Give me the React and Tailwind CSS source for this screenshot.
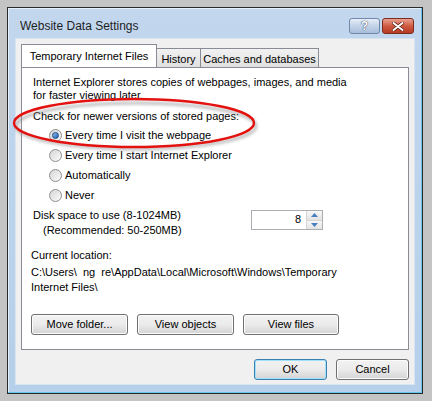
const font = { fontFamily: '"Liberation Sans", Arial, sans-serif' }

function Radio({ checked, label }) {
  return (
    <div className="flex h-[20px] items-center">
      <span className="ml-[16px] flex h-[13px] w-[13px] items-center justify-center rounded-full border border-[#8e8f8f] bg-gradient-to-br from-[#d5d5d5] to-[#fbfbfb]">
        {checked && (
          <span className="h-[7px] w-[7px] rounded-full border border-[#1c4c88] bg-gradient-to-br from-[#8ec6f5] to-[#1d5aa8]" />
        )}
      </span>
      <span className="ml-[3px]">{label}</span>
    </div>
  )
}

function Button({ children, className = '', primary = false }) {
  return (
    <div
      className={`flex h-[21px] items-center justify-center rounded-[3px] border ${
        primary ? 'border-[#3c7fb1] shadow-[inset_0_0_0_1px_#9fe0fb]' : 'border-[#707070] shadow-[inset_0_0_0_1px_#fcfcfc]'
      } bg-gradient-to-b from-[#f2f2f2] via-[#ebebeb] to-[#d3d3d3] ${className}`}
    >
      {children}
    </div>
  )
}

function Spinner() {
  return (
    <div className="flex h-[20px] w-[72px] border border-[#abadb3] bg-white">
      <div className="flex-1 pr-[5px] pt-[2px] text-right">8</div>
      <div className="flex w-[16px] flex-col border-l border-[#d5d5d5]">
        <div className="flex flex-1 items-center justify-center border-b border-[#d5d5d5] bg-gradient-to-b from-[#f7f7f7] to-[#e3e3e3]">
          <svg width="7" height="4" viewBox="0 0 7 4"><path d="M0 4 L3.5 0 L7 4 Z" fill="#4a7fc0" /></svg>
        </div>
        <div className="flex flex-1 items-center justify-center bg-gradient-to-b from-[#f7f7f7] to-[#e3e3e3]">
          <svg width="7" height="4" viewBox="0 0 7 4"><path d="M0 0 L3.5 4 L7 0 Z" fill="#4a7fc0" /></svg>
        </div>
      </div>
    </div>
  )
}

export default function App() {
  return (
    <div className="relative h-[401px] w-[432px] overflow-hidden bg-[#c4c4c4] pl-[7px] pt-[7px] text-[11px] leading-[13px] text-black" style={font}>
      {/* window frame */}
      <div className="flex h-[387px] w-[416px] flex-col border border-[#2a2a2a] bg-gradient-to-b from-[#c2d7ee] to-[#b6cfea] shadow-[inset_-1px_-1px_0_#63c6ee,inset_1px_1px_0_#e6f0fa]">
        {/* title bar */}
        <div className="flex h-[30px] items-start pl-[12px] pr-[8px]">
          <span className="mt-[11px] text-[12px] leading-[15px] text-[#1e1e1e]">Website Data Settings</span>
          <div className="ml-auto mt-[10px] flex gap-[2px]">
            <div className="flex h-[16px] w-[31px] items-center justify-center rounded-[3px] border border-[#6f87a8] bg-gradient-to-b from-[#e6eef8] via-[#c3d3e8] to-[#a9bfdc]">
              <span className="text-[12px] font-bold leading-[12px] text-white [text-shadow:0_0_1px_#2c3f5e,0_0_1px_#2c3f5e]">?</span>
            </div>
            <div className="flex h-[16px] w-[32px] items-center justify-center rounded-[3px] border border-[#7e2a1c] bg-gradient-to-b from-[#e7a190] via-[#cf5a41] to-[#b53a22]">
              <svg width="12" height="9" viewBox="0 0 12 9">
                <path d="M1.5 1 L10.5 8 M10.5 1 L1.5 8" stroke="#5a1b10" strokeWidth="3.4" strokeLinecap="round" />
                <path d="M1.5 1 L10.5 8 M10.5 1 L1.5 8" stroke="#ffffff" strokeWidth="2" strokeLinecap="round" />
              </svg>
            </div>
          </div>
        </div>

        {/* client area */}
        <div className="mx-[7px] flex h-[347px] flex-col border border-[#d9e4f1] bg-[#f0f0f0] px-[5px] pt-[5px]">
          {/* tabs */}
          <div className="flex h-[23px] items-end">
            <div className="relative z-10 flex h-[23px] w-[136px] items-start justify-center border border-b-0 border-[#898c95] bg-white pt-[5px]">
              Temporary Internet Files
            </div>
            <div className="mb-[-1px] flex h-[20px] w-[44px] items-start justify-center border border-l-0 border-[#898c95] bg-gradient-to-b from-[#f2f2f2] to-[#e0e0e0] pt-[4px]">
              History
            </div>
            <div className="mb-[-1px] flex h-[20px] w-[118px] items-start justify-center border border-l-0 border-[#898c95] bg-gradient-to-b from-[#f2f2f2] to-[#e0e0e0] pt-[4px]">
              Caches and databases
            </div>
          </div>

          {/* tab panel */}
          <div className="flex h-[283px] flex-col border border-[#898c95] bg-white pl-[11px] pr-[9px] pt-[8px]">
            <p>Internet Explorer stores copies of webpages, images, and media</p>
            <p>for faster viewing later.</p>
            <p className="mt-[8px]">Check for newer versions of stored pages:</p>
            <div className="mt-[2px] flex flex-col">
              <Radio checked label="Every time I visit the webpage" />
              <Radio label="Every time I start Internet Explorer" />
              <Radio label="Automatically" />
              <Radio label="Never" />
            </div>

            <div className="mt-[4px] flex items-start">
              <div className="flex w-[218px] flex-col">
                <p>Disk space to use (8-1024MB)</p>
                <p className="mt-[2px] pl-[10px]">(Recommended: 50-250MB)</p>
              </div>
              <div className="mt-[1px]">
                <Spinner />
              </div>
            </div>

            <p className="-ml-[2px] mt-[12px]">Current location:</p>
            <div className="-ml-[2px] mt-[3px] whitespace-pre leading-[15px]">
              <p>{'C:\\Users\\  ng  re\\AppData\\Local\\Microsoft\\Windows\\Temporary'}</p>
              <p>{'Internet Files\\'}</p>
            </div>

            <div className="-ml-[2px] mt-[19px] flex gap-[9px]">
              <Button className="w-[97px]">Move folder...</Button>
              <Button className="w-[97px]">View objects</Button>
              <Button className="w-[96px]">View files</Button>
            </div>
          </div>

          {/* dialog buttons */}
          <div className="mt-[9px] flex justify-end gap-[9px]">
            <Button primary className="w-[73px]">OK</Button>
            <Button className="w-[73px]">Cancel</Button>
          </div>
        </div>
      </div>

      {/* red annotation ring */}
      <svg className="pointer-events-none absolute left-0 top-0" width="432" height="401" viewBox="0 0 432 401">
        <defs>
          <filter id="ringShadow" x="-10%" y="-30%" width="120%" height="160%">
            <feGaussianBlur stdDeviation="1.6" />
          </filter>
        </defs>
        <ellipse cx="136" cy="126" rx="120" ry="23" fill="none" stroke="#8a8a8a" strokeOpacity="0.55" strokeWidth="3" filter="url(#ringShadow)" />
        <ellipse cx="134" cy="123" rx="120" ry="24" fill="none" stroke="#e3120f" strokeWidth="2.4" />
      </svg>
    </div>
  )
}
